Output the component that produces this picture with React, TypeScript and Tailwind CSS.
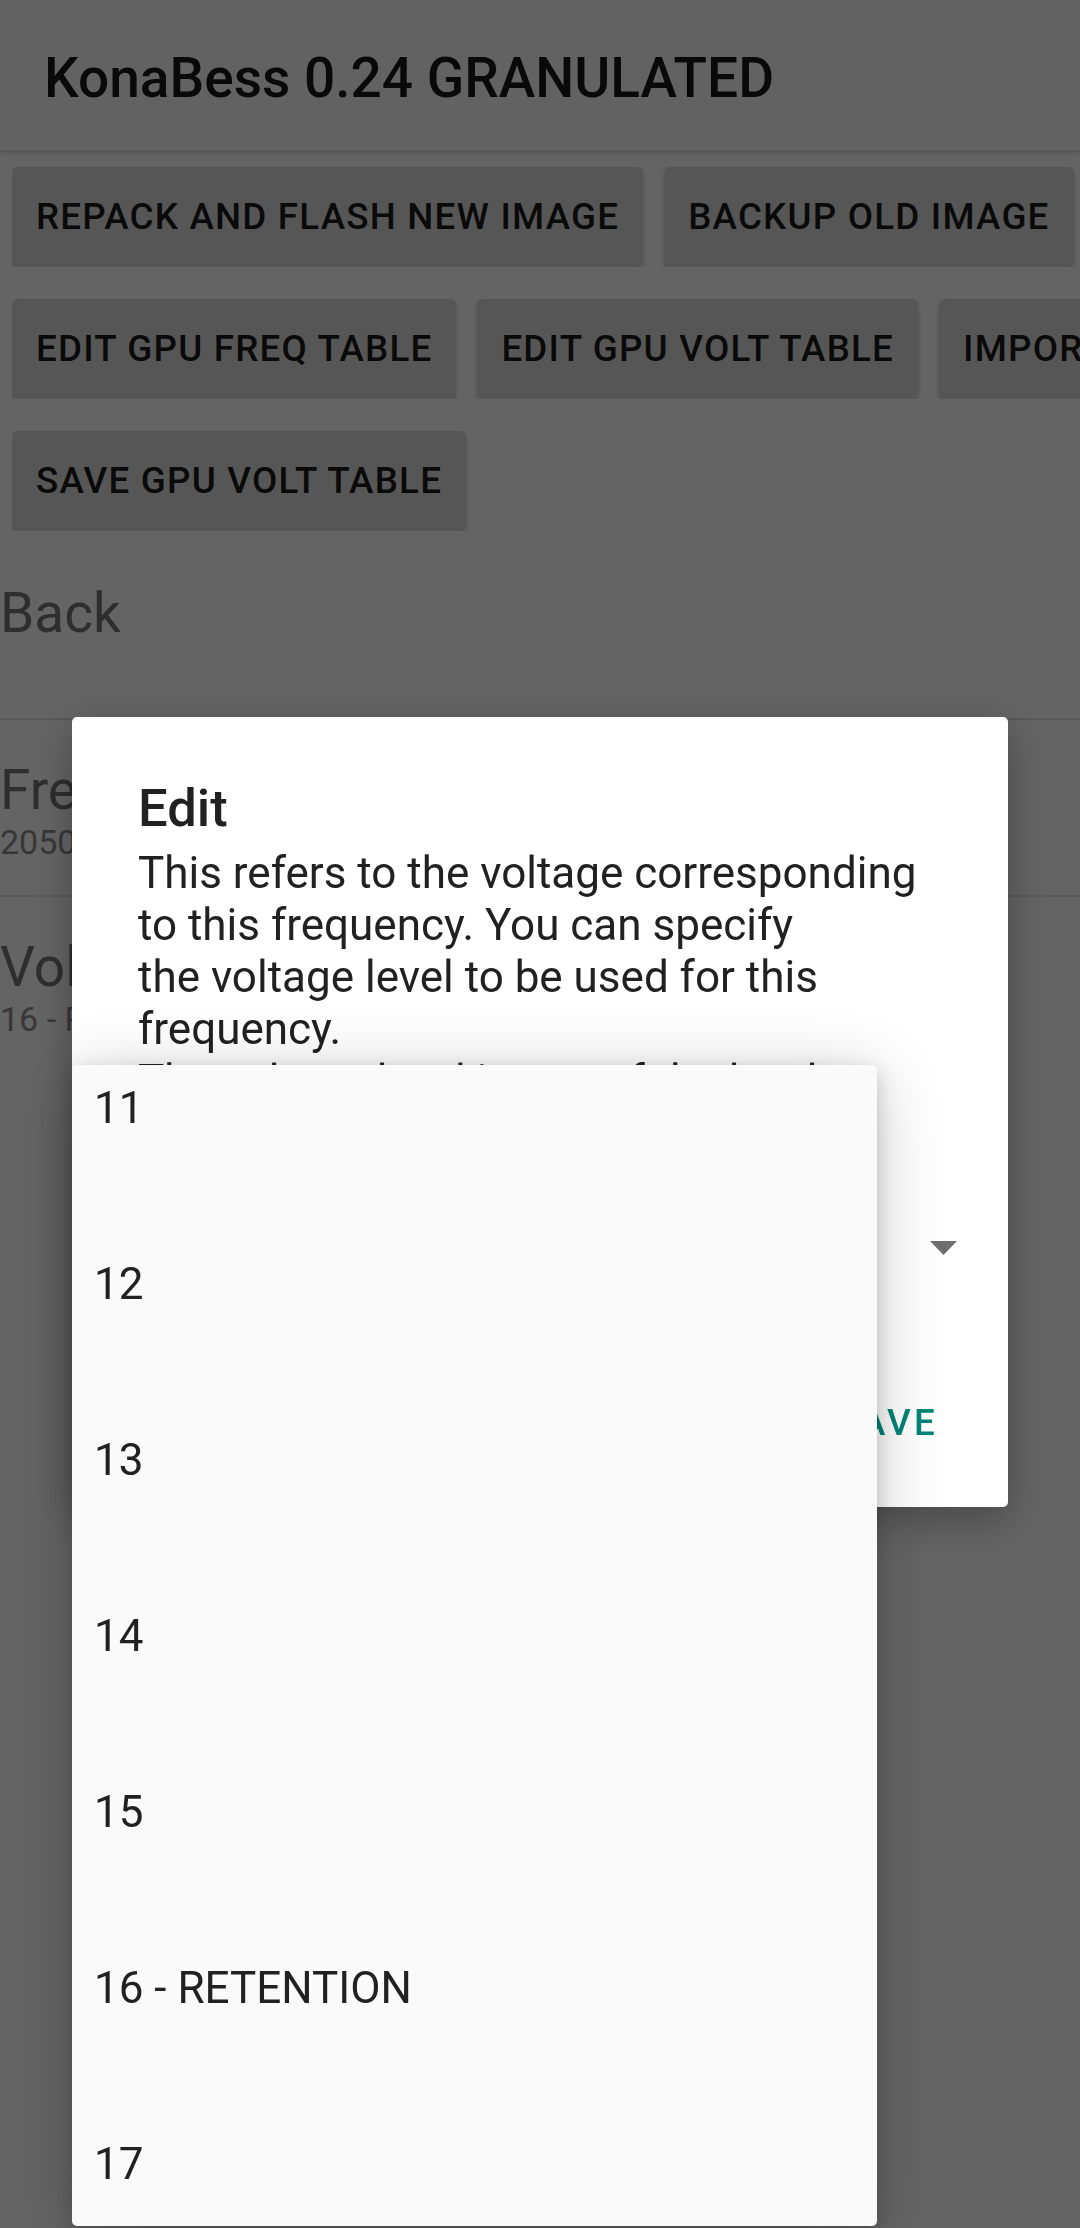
const rows = [
  ["REPACK AND FLASH NEW IMAGE", "BACKUP OLD IMAGE"],
  ["EDIT GPU FREQ TABLE", "EDIT GPU VOLT TABLE", "IMPORT FROM FILE"],
  ["SAVE GPU VOLT TABLE"],
];

const items = [
  { title: "Back", sub: "" },
  { title: "Frequency", sub: "2050000000" },
  { title: "Voltage level", sub: "16 - RETENTION" },
];

const levels = ["11", "12", "13", "14", "15", "16 - RETENTION", "17", "18"];

function App() {
  return (
    <div className="relative min-h-screen overflow-hidden bg-[#fafafa] font-['Roboto',sans-serif]">
      {/* toolbar */}
      <div className="flex h-[152px] items-center border-b-[2px] border-[#dcdcdc] bg-[#f5f5f5] pl-[44px] pt-[6px] shadow-[0_2px_4px_rgba(0,0,0,0.12)]">
        <h1 className="text-[55px] font-medium leading-[62px] text-[#000000]/90">KonaBess 0.24 GRANULATED</h1>
      </div>

      <div className="flex flex-col gap-[32px] pl-[12px] pt-[15px]">
        {rows.map((row, i) => (
          <div key={i} className="flex gap-[21px] overflow-hidden">
            {row.map((label) => (
              <button
                key={label}
                className="flex h-[100px] flex-none items-center whitespace-nowrap rounded-[6px] bg-[#d6d6d6] px-[24px] text-[36.75px] font-medium tracking-[1.2px] text-[#000000]/90 shadow-[0_3px_5px_rgba(0,0,0,0.22)]"
              >
                {label}
              </button>
            ))}
          </div>
        ))}
      </div>

      <div className="mt-[12px]">
        {items.map((it, i) => (
          <div
            key={it.title}
            className={
              "h-[177px] pt-[39px] " + (i < items.length - 1 ? "border-b-[2px] border-[#e0e0e0]" : "")
            }
          >
            <div className="text-[55px] leading-[63px] text-[#737373]">{it.title}</div>
            <div className="text-[34px] leading-[40px] text-[#8a8a8a]">{it.sub}</div>
          </div>
        ))}
      </div>

      {/* scrim */}
      <div className="fixed inset-0 bg-black/60"></div>

      {/* dialog */}
      <div className="fixed left-[72px] top-[717px] h-[790px] w-[936px] rounded-[5px] bg-white pt-[60px] shadow-[0_12px_40px_rgba(0,0,0,0.3)]">
        <div className="px-[66px]">
          <h2 className="text-[52.5px] font-medium leading-[62px] text-[#212121]">Edit</h2>
          <p className="mt-[8px] text-[44px] leading-[52px] text-[#212121]">
            This refers to the voltage corresponding
            <br />
            to this frequency. You can specify
            <br />
            the voltage level to be used for this
            <br />
            frequency.
            <br />
            The voltage level is one of the levels
          </p>
        </div>
        <div className="mt-[78px] flex h-[126px] items-center justify-between pl-[66px] pr-[51px]">
          <span className="text-[44px] text-[#212121]">16 - RETENTION</span>
          <svg width="27" height="14" viewBox="0 0 27 14">
            <path d="M0 0 L27 0 L13.5 14 Z" fill="#6f6f6f" />
          </svg>
        </div>
        <div className="mt-[90px] flex justify-end gap-[40px] pr-[70px] text-[36.75px] font-medium leading-[44px] tracking-[3.2px] text-[#008577]">
          <span>CANCEL</span>
          <span>SAVE</span>
        </div>
      </div>

      {/* spinner dropdown */}
      <div className="fixed left-[72px] top-[1065px] h-[1161px] w-[805px] overflow-hidden rounded-[5px] bg-[#fafafa] shadow-[0_6px_20px_rgba(0,0,0,0.18),0_10px_70px_rgba(0,0,0,0.2)]">
        {levels.map((l) => (
          <div key={l} className="h-[176px] pl-[22px] pt-[18px] text-[44px] leading-[51px] text-[#212121]">
            {l}
          </div>
        ))}
      </div>
    </div>
  );
}

export default App;
